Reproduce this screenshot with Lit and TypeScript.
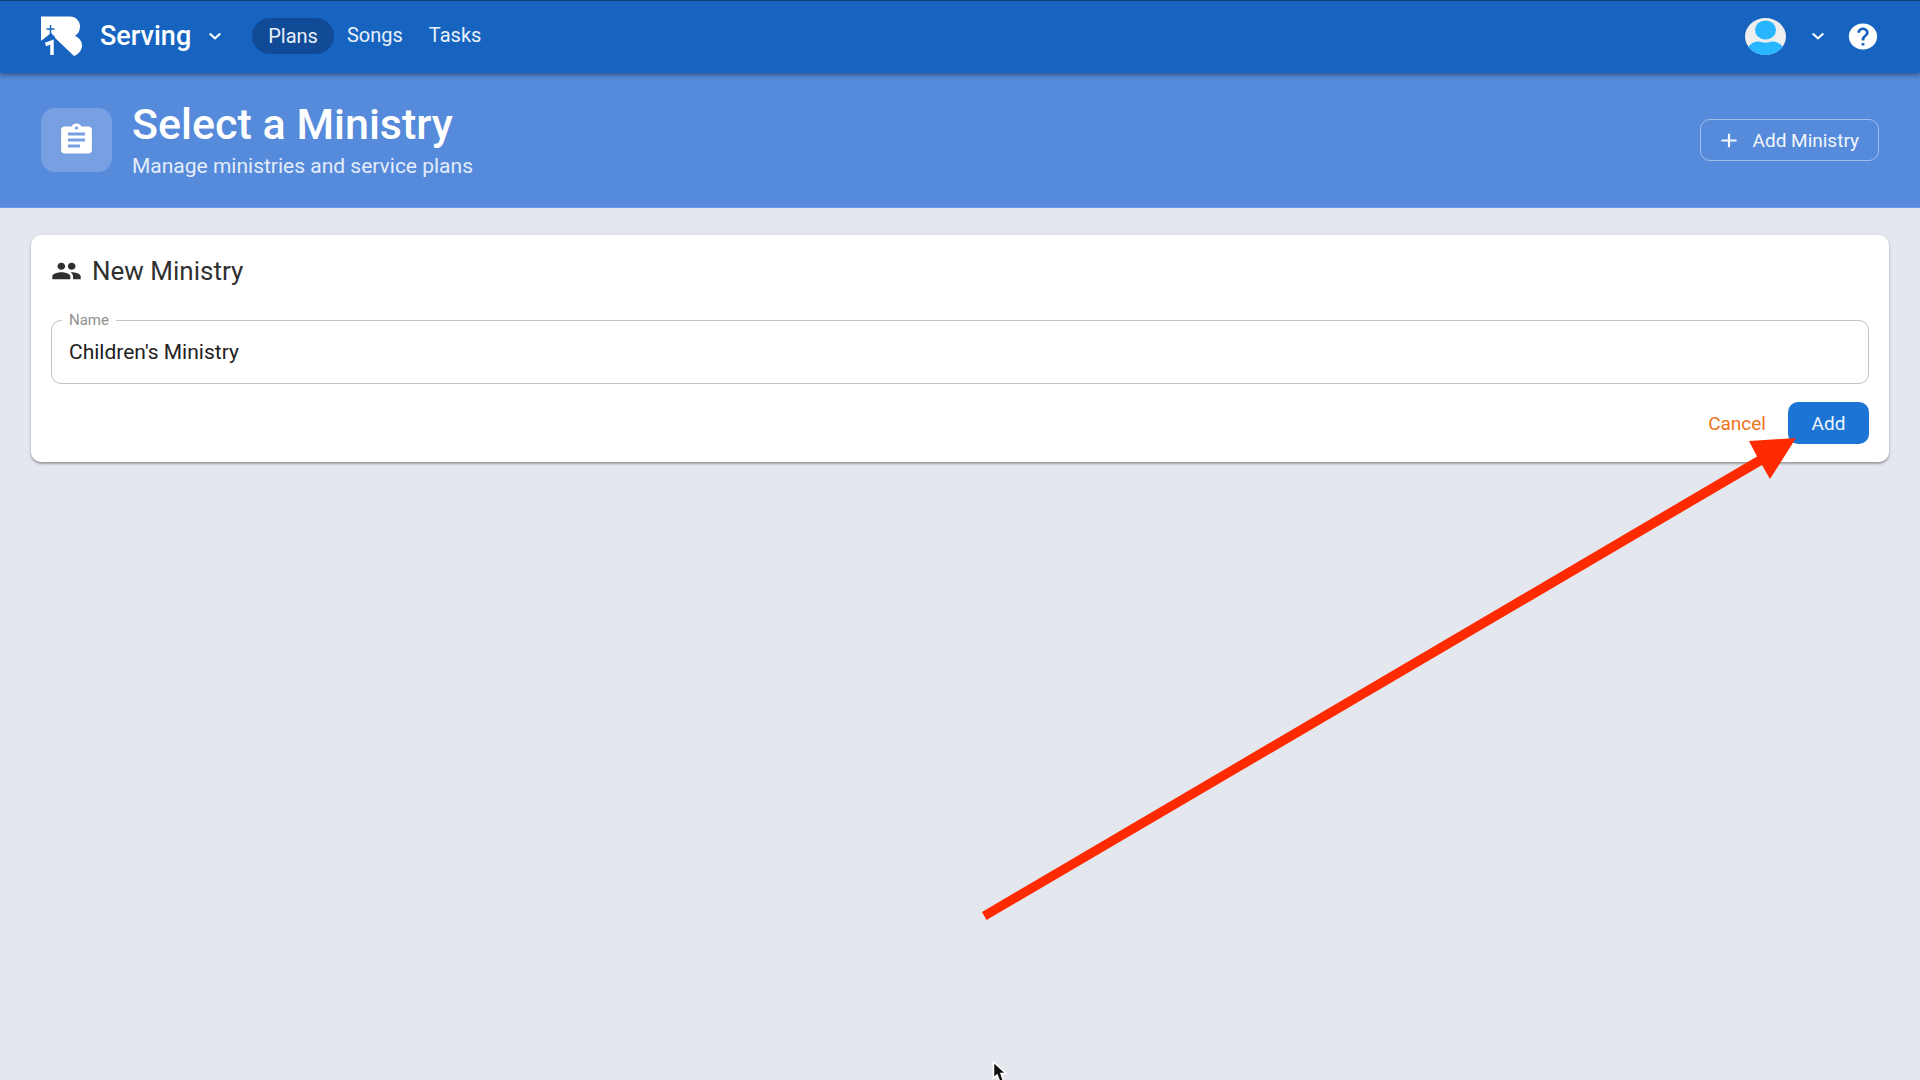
import { LitElement, html, css, svg } from "lit";
import { customElement, state } from "lit/decorators.js";

const ICONS = {
  chevron: "M7.41 8.59 12 13.17l4.59-4.58L18 10l-6 6-6-6 1.41-1.41z",
  help: "M12 2C6.48 2 2 6.48 2 12s4.48 10 10 10 10-4.48 10-10S17.52 2 12 2zm1 17h-2v-2h2v2zm2.07-7.75-.9.92C13.45 12.9 13 13.5 13 15h-2v-.5c0-1.1.45-2.1 1.17-2.83l1.24-1.26c.37-.36.59-.86.59-1.41 0-1.1-.9-2-2-2s-2 .9-2 2H8c0-2.21 1.79-4 4-4s4 1.79 4 4c0 .88-.36 1.68-.93 2.25z",
  clipboard: "M19 3h-4.18C14.4 1.84 13.3 1 12 1c-1.3 0-2.4.84-2.82 2H5c-1.1 0-2 .9-2 2v14c0 1.1.9 2 2 2h14c1.1 0 2-.9 2-2V5c0-1.1-.9-2-2-2zm-7 0c.55 0 1 .45 1 1s-.45 1-1 1-1-.45-1-1 .45-1 1-1zm2 14H7v-2h7v2zm3-4H7v-2h10v2zm0-4H7V7h10v2z",
  plus: "M19 13h-6v6h-2v-6H5v-2h6V5h2v6h6v2z",
  people: "M16 11c1.66 0 2.99-1.34 2.99-3S17.66 5 16 5c-1.66 0-3 1.34-3 3s1.34 3 3 3zm-8 0c1.66 0 2.99-1.34 2.99-3S9.66 5 8 5C6.34 5 5 6.34 5 8s1.34 3 3 3zm0 2c-2.33 0-7 1.17-7 3.5V19h14v-2.5c0-2.33-4.67-3.5-7-3.5zm8 0c-.29 0-.62.02-.97.05 1.16.84 1.97 1.97 1.97 3.45V19h6v-2.5c0-2.33-4.67-3.5-7-3.5z",
};

const icon = (name: keyof typeof ICONS, cls: string) => html`
  <svg class=${cls} viewBox="0 0 24 24" preserveAspectRatio="none" aria-hidden="true">
    ${svg`<path fill="currentColor" d=${ICONS[name]}></path>`}
  </svg>`;

@customElement("app-root")
export class AppRoot extends LitElement {
  static styles = css`
    :host {
      display: block;
      position: relative;
      min-height: 100vh;
      overflow: hidden;
      background: #e4e7ee;
      font-family: Roboto, "Liberation Sans", sans-serif;
      color: #212121;
    }
    *, *::before, *::after { box-sizing: border-box; }
    svg { display: block; flex: none; }
    button { font: inherit; cursor: pointer; }
    .bar {
      position: relative;
      display: flex;
      align-items: center;
      height: 73px;
      padding: 0 40px 2px 41px;
      background: #1764c0;
      border-top: 1px solid #123f78;
      box-shadow: 0 2px 5px rgba(0, 0, 0, 0.4);
      color: #fff;
    }
    .logo { width: 41px; height: 40px; }
    .app {
      display: flex;
      align-items: center;
      gap: 12px;
      margin-left: 18px;
      padding: 0;
      border: 0;
      background: none;
      color: inherit;
      font-size: 27px;
      font-weight: 500;
    }
    .nav { display: flex; align-items: center; gap: 13px; margin-left: 25px; }
    .link {
      color: #e9f0fa;
      font-size: 20px;
      line-height: 24px;
      text-decoration: none;
      padding-bottom: 3px;
    }
    .link + .link + .link { margin-left: 13px; }
    .current { padding: 6px 16px; border-radius: 18px; background: #114b98; }
    .account { display: flex; align-items: center; gap: 16px; margin-left: auto; }
    .plain { display: flex; align-items: center; gap: 20px; padding: 0; border: 0; background: none; color: inherit; }
    .avatar { width: 41px; height: 37px; }
    .chevron { width: 24px; height: 22px; }
    .help { width: 34px; height: 31px; }
    .banner {
      display: flex;
      align-items: center;
      gap: 20px;
      height: 135px;
      padding: 0 41px;
      background: #568ada;
      border-bottom: 1px solid #6c9ae2;
      color: #fff;
    }
    .tile {
      display: flex;
      align-items: center;
      justify-content: center;
      width: 71px;
      height: 64px;
      border-radius: 14px;
      background: #789fe1;
    }
    .clipboard { width: 41px; height: 36px; }
    .title { margin: 0; font-size: 43px; line-height: 48px; font-weight: 500; }
    .sub { margin: 4px 0 0; font-size: 21px; line-height: 28px; color: #e4edfa; }
    .outline {
      display: flex;
      align-items: center;
      gap: 11px;
      height: 42px;
      margin-left: auto;
      padding: 0 19px 0 15px;
      border: 1px solid #a2bfec;
      border-radius: 10px;
      background: none;
      color: #f1f6fd;
      font-size: 19px;
    }
    .plus { width: 26px; height: 23px; }
    .card {
      margin: 27px 31px;
      padding: 20px 20px 18px;
      border-radius: 10px;
      background: #fff;
      box-shadow: 0 2px 2px rgba(0, 0, 0, 0.25), 0 1px 4px rgba(0, 0, 0, 0.12);
    }
    .heading {
      display: flex;
      align-items: center;
      gap: 10px;
      margin: 0;
      font-size: 26px;
      line-height: 32px;
      font-weight: 400;
      color: #303030;
    }
    .people { width: 31px; height: 28px; }
    .field {
      margin: 24px 0 0;
      padding: 0;
      border: 1px solid #c4c4c4;
      border-radius: 10px;
      min-width: 0;
    }
    .legend { margin-left: 10px; padding: 0 7px; font-size: 15px; line-height: 18px; color: #8f8f8f; }
    .input {
      display: block;
      width: 100%;
      height: 54px;
      padding: 0 17px 8px;
      border: 0;
      outline: 0;
      background: none;
      font: inherit;
      font-size: 21px;
      color: #212121;
    }
    .actions { display: flex; justify-content: flex-end; gap: 4px; margin-top: 18px; }
    .btn { height: 42px; border: 0; border-radius: 10px; padding: 0 18px; font-size: 19px; background: none; }
    .cancel { color: #ed7421; }
    .add { min-width: 81px; background: #1c75d5; color: #edf5fd; }
    .arrow { position: absolute; left: 980px; top: 430px; pointer-events: none; }
    .cursor { position: absolute; left: 991px; top: 1060px; pointer-events: none; }
  `;

  @state() private ministry = "Children's Ministry";

  render() {
    return html`
      <header class="bar">
        <svg class="logo" viewBox="0 0 41 40" role="img" aria-label="B1">
          <path fill="#fff" d="M0 0.500H29C35 .5 39 5 39 10.500C39 15 37 18 34 20C38 21.500 41 25 41 29.500C41 34 38 38 33 40L11.500 19.500L0 25Z"></path>
          <path fill="none" stroke="#1764c0" stroke-width="1.500" d="M9.500 9V20M5.500 13H13.500"></path>
          <path fill="#1764c0" d="M0 25L10 17L14 21V40H0Z"></path>
          <path fill="none" stroke="#fff" stroke-width="3.500" d="M4.500 28.500L11 26V39"></path>
        </svg>
        <button class="app" type="button">Serving ${icon("chevron", "chevron")}</button>
        <nav class="nav">
          <a class="link current" href="#plans" aria-current="page">Plans</a>
          <a class="link" href="#songs">Songs</a>
          <a class="link" href="#tasks">Tasks</a>
        </nav>
        <div class="account">
          <button class="plain" type="button" aria-label="Account">
            <svg class="avatar" viewBox="0 0 41 37" aria-hidden="true">
              <defs><clipPath id="face"><ellipse cx="20.500" cy="18.500" rx="20.500" ry="18.500"></ellipse></clipPath></defs>
              <g clip-path="url(#face)">
                <rect width="41" height="37" fill="#eee"></rect>
                <ellipse cx="20.500" cy="12" rx="10.500" ry="9.500" fill="#27b6ff"></ellipse>
                <path fill="#27b6ff" d="M3 29C6 25 10 23 14 23.500C18 25 23 25 27 23.500C31 23 35 25 38 29V37H3Z"></path>
              </g>
            </svg>
            ${icon("chevron", "chevron")}
          </button>
          <button class="plain" type="button" aria-label="Help">${icon("help", "help")}</button>
        </div>
      </header>

      <section class="banner">
        <div class="tile">${icon("clipboard", "clipboard")}</div>
        <div>
          <h1 class="title">Select a Ministry</h1>
          <p class="sub">Manage ministries and service plans</p>
        </div>
        <button class="outline" type="button">${icon("plus", "plus")}Add Ministry</button>
      </section>

      <form class="card" @submit=${(e: Event) => e.preventDefault()}>
        <h2 class="heading">${icon("people", "people")}New Ministry</h2>
        <fieldset class="field">
          <legend class="legend"><label for="name">Name</label></legend>
          <input
            id="name"
            class="input"
            type="text"
            .value=${this.ministry}
            @input=${(e: Event) => (this.ministry = (e.target as HTMLInputElement).value)}
          />
        </fieldset>
        <div class="actions">
          <button class="btn cancel" type="button">Cancel</button>
          <button class="btn add" type="submit">Add</button>
        </div>
      </form>

      <svg class="arrow" width="820" height="495" aria-hidden="true">
        <path fill="#ff2a00" d="M2 482L777 26.500L769 11L816 8L790 49L782 35L6.500 490Z"></path>
      </svg>
      <svg class="cursor" width="20" height="20" aria-hidden="true">
        <path fill="#111" stroke="#fff" stroke-width="1.500" d="M2.500 2V18L6 15L8.500 21H12.500L10 13.500H15Z"></path>
      </svg>
    `;
  }
}
